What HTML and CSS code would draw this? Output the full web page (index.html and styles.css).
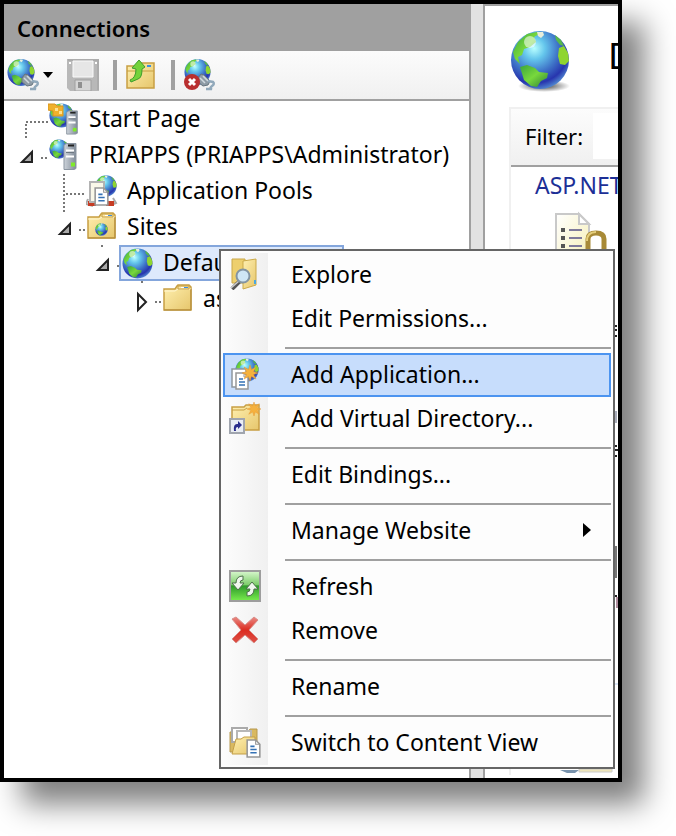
FILE: index.html
```html
<!DOCTYPE html>
<html lang="en">
<head>
<meta charset="utf-8">
<title>Connections</title>
<link rel="stylesheet" href="styles.css">
</head>
<body>
<svg class="defs" aria-hidden="true">
  <defs>
    <radialGradient id="sea" cx=".4" cy=".3" r=".75">
      <stop offset="0" stop-color="#b8ffff"/><stop offset=".25" stop-color="#65c6ec"/><stop offset=".55" stop-color="#3f74c8"/><stop offset=".8" stop-color="#2735ae"/><stop offset="1" stop-color="#5b9bd8"/>
    </radialGradient>
    <linearGradient id="land" x1="0" y1="0" x2="1" y2="1"><stop offset="0" stop-color="#3aa43c"/><stop offset=".5" stop-color="#78d83c"/><stop offset="1" stop-color="#2c7d35"/></linearGradient>
    <linearGradient id="gold" x1="0" y1="0" x2="1" y2="1"><stop offset="0" stop-color="#fff0b0"/><stop offset="1" stop-color="#e6c66c"/></linearGradient>
    <linearGradient id="steel" x1="0" y1="0" x2="1" y2="0"><stop offset="0" stop-color="#cdd3da"/><stop offset="1" stop-color="#7f8a97"/></linearGradient>
    <linearGradient id="leaf" x1="0" y1="0" x2="0" y2="1"><stop offset="0" stop-color="#d9f7cf"/><stop offset=".45" stop-color="#7fce6d"/><stop offset=".5" stop-color="#2f9a2b"/><stop offset="1" stop-color="#7aee4e"/></linearGradient>
    <linearGradient id="rose" x1="0" y1="0" x2="0" y2="1"><stop offset="0" stop-color="#ea8a84"/><stop offset=".5" stop-color="#dc2c20"/><stop offset="1" stop-color="#dd5148"/></linearGradient>
    <linearGradient id="cream" x1="0" y1="0" x2="1" y2="1"><stop offset="0" stop-color="#fff"/><stop offset="1" stop-color="#f6efb4"/></linearGradient>
    <radialGradient id="shade"><stop offset="0" stop-color="#000" stop-opacity=".75"/><stop offset="1" stop-color="#000" stop-opacity="0"/></radialGradient>
  </defs>
  <symbol id="globe" viewBox="0 0 60 60">
    <circle cx="30" cy="30" r="29" fill="url(#sea)"/>
    <path d="M3 22 8 12 17 4 27 2 29 4 24 7 26 12 20 17 14 19 12 25 8 27 10 34 5 29z" fill="url(#land)"/>
    <path d="M10 37 17 35 25 38 29 42 38 43 37 48 31 51 27 57 21 56 14 50z" fill="url(#land)"/>
    <path d="M49 18 54 16 58 23 59 31 55 35 50 34 48 26z" fill="#8fd52f"/>
    <path d="M45 5 51 10 54 16 50 15 46 10z" fill="#58b94b"/>
    <path d="M27 2h6l1 3-3 3-3-2z" fill="#e8edda"/>
    <circle cx="20" cy="12" r="6" fill="#fff" opacity=".55"/>
  </symbol>
  <symbol id="folder" viewBox="0 0 32 32">
    <path d="M2 6h11l2-3 1-1h11l2 2v23H2z" fill="url(#gold)" stroke="#c79f43" stroke-width="1.5"/>
    <path d="M2 8h11l3-2h13" fill="none" stroke="#fff5cf"/>
    <path d="M16 3h11v3H16z" fill="#fbe7a5" stroke="#c79f43"/>
    <path d="M19 4h3v1h-3z" fill="#fff"/><path d="M22 4h4v1h-4z" fill="#3d8ee0"/>
    <path d="M2 27h27V6" fill="none" stroke="#b28b3c"/>
  </symbol>
  <symbol id="server" viewBox="0 0 14 28">
    <path d="M1 3 3 1h10v25l-2 1H1z" fill="url(#steel)" stroke="#8b95a1"/>
    <path d="M5 3h6" stroke="#222" stroke-width="2"/>
    <path d="M3 8h8M3 14h8" stroke="#fff" stroke-width="2"/><path d="M3 10h8" stroke="#6d7781"/>
    <path d="M8 20h4v4H8z" fill="#7fea29"/>
  </symbol>
  <symbol id="page" viewBox="0 0 14 18">
    <path d="M1 1h8l4 4v12H1z" fill="#fff" stroke="#979797" stroke-width="1.5"/>
    <path d="M9 1v4h4" fill="none" stroke="#979797"/>
    <path d="M4 7h4M4 10h6M4 13h6" stroke="#3572b5" stroke-width="1.5"/>
  </symbol>
  <symbol id="spark" viewBox="0 0 16 16">
    <path d="m8 0 1.5 4.5L14 2l-2.500 4.500L16 8l-4.500 1.500L14 14 9.500 11.500 8 16l-1.500-4.500L2 14l2.500-4.500L0 8l4.500-1.500L2 2l4.500 2.500z" fill="#f5b13d" stroke="#e69632" stroke-width=".5"/>
  </symbol>
  <symbol id="plug" viewBox="0 0 20 20">
    <path d="m2 7 3-4 3 1 6 6-2 4-5 1-5-4z" fill="#8e9ba5" stroke="#66747e"/>
    <path d="m4 7 5 5M7 5l5 5" stroke="#d0d9df" stroke-width="1.5"/>
    <path d="m12 10 5 1q2 2-1 4t0 3h-6" fill="none" stroke="#91a9bb" stroke-width="2.5"/>
  </symbol>
</svg>

<main class="window">
  <section class="connections">
    <h1 class="connections-title">Connections</h1>
    <div class="toolbar">
      <button class="tool tool-connect" aria-label="Connect">
        <svg width="34" height="34" viewBox="0 0 34 34"><use href="#globe" x="0" y="0" width="28" height="29"/><use href="#plug" x="13" y="13" width="20" height="20"/></svg>
        <svg width="10" height="6" viewBox="0 0 10 6"><path d="M0 0h10L5 6z"/></svg>
      </button>
      <button class="tool" aria-label="Save">
        <svg width="32" height="32" viewBox="0 0 32 32"><path d="M0 0h32v32H3l-3-3z" fill="#b8b8b8"/><path d="M1 1h30v30" fill="none" stroke="#acacac" stroke-width="2"/><path d="M6 2h20v16H6z" fill="#e6e6e6" stroke="#fafafa"/><path d="M8 21h16v11H8z" fill="#d6d6d6" stroke="#a0a0a0"/><path d="M11 23h4v6h-4z" fill="#909090"/><path d="M2 3h2v2H2zM28 3h2v2h-2z" fill="#fff"/></svg>
      </button>
      <span class="divider"></span>
      <button class="tool" aria-label="Up">
        <svg width="32" height="32" viewBox="0 0 32 32"><path d="M2 7h12l2-3h13v25H2z" fill="url(#gold)" stroke="#c79f43" stroke-width="1.5"/><path d="M2 12h27" stroke="#c79f43"/><path d="M22 6h4v2h-4z" fill="#3d8ee0"/><path d="M5 21q6-2 6-11l-4-1 7-8 6 7-3 2q0 9-4 10l-7 3z" fill="#74d23b" stroke="#3d9c2e"/></svg>
      </button>
      <span class="divider"></span>
      <button class="tool" aria-label="Disconnect">
        <svg width="34" height="34" viewBox="0 0 34 34"><use href="#globe" x="1" y="0" width="27" height="28"/><use href="#plug" x="13" y="13" width="20" height="20"/><circle cx="9" cy="24" r="8" fill="#b92f2f"/><path d="m6 21 6 6m0-6-6 6" stroke="#fff" stroke-width="3"/></svg>
      </button>
    </div>
    <ul class="tree">
      <li>
        <div class="row">
          <svg class="lines" width="25" height="36"><path class="dots" d="M28 21H5M6 23v16"/></svg>
          <a class="node" href="#"><svg width="32" height="32" viewBox="0 0 32 32"><use href="#globe" x="1" y="0" width="25" height="25"/><path d="M0 1h7l2 2h6v10H5V8L0 7z" fill="#f0b12b" stroke="#d89420"/><path d="M7 5h3v3H7zM11 8h3v3h-3z" fill="#ffe18e"/><use href="#server" x="17" y="7" width="14" height="25"/></svg>Start Page</a>
        </div>
      </li>
      <li>
        <div class="row">
          <svg class="lines" width="25" height="36"><path class="open" d="M12 15v10H2z"/><path class="dots" d="M21 21h7"/></svg>
          <a class="node" href="#"><svg width="32" height="32" viewBox="0 0 32 32"><use href="#globe" x="1" y="0" width="20" height="20"/><use href="#server" x="15" y="3" width="14" height="29"/></svg>PRIAPPS (PRIAPPS\Administrator)</a>
        </div>
        <ul>
          <li>
            <div class="row">
              <svg class="lines" width="25" height="36"><path class="dots" d="M6 1v38M8 21h20"/></svg>
              <a class="node" href="#"><svg width="32" height="32" viewBox="0 0 32 32"><use href="#globe" x="9" y="0" width="22" height="22"/><path d="M2 24 0 29l7 2M27 23l3 5-5 2" fill="none" stroke="#aaa" stroke-width="2"/><path d="M2 26h8v5H2zM20 26h8v5h-8z" fill="#c63c24"/><path d="M4 7h14v20H4z" fill="#faf8e9" stroke="#b3b3b3" stroke-width="2"/><use href="#page" x="8" y="12" width="15" height="19"/></svg>Application Pools</a>
            </div>
          </li>
          <li>
            <div class="row">
              <svg class="lines" width="25" height="36"><path class="open" d="M12 15v10H2z"/><path class="dots" d="M21 21h7"/></svg>
              <a class="node" href="#"><svg width="32" height="32" viewBox="0 0 32 32"><use href="#folder" width="32" height="32"/><use href="#globe" x="9" y="12" width="13" height="13"/></svg>Sites</a>
            </div>
            <ul>
              <li>
                <div class="row">
                  <svg class="lines" width="25" height="36"><path class="dots" d="M7 1h2"/><path class="open" d="M14 15v10H4z"/><path class="dots" d="M23 21h2"/></svg>
                  <a class="node selected" href="#"><svg width="32" height="32" viewBox="0 0 32 32"><use href="#globe" x="0" y="1" width="31" height="31"/></svg>Default Web Site</a>
                </div>
                <ul>
                  <li>
                    <div class="row">
                      <svg class="lines" width="25" height="36"><path class="dots" d="M7 1h2"/><path class="closed" d="M4 13v16l8-8z"/><path class="dots" d="M21 21h7"/></svg>
                      <a class="node" href="#"><svg width="32" height="32" viewBox="0 0 32 32"><use href="#folder" width="32" height="32"/></svg>as</a>
                    </div>
                  </li>
                </ul>
              </li>
            </ul>
          </li>
        </ul>
      </li>
    </ul>
  </section>

  <section class="home">
    <header class="home-head">
      <svg width="62" height="64" viewBox="0 0 62 64"><ellipse cx="34" cy="56" rx="26" ry="6" fill="url(#shade)"/><use href="#globe" x="0" y="0" width="60" height="60"/></svg>
      <h2>D</h2>
    </header>
    <div class="features">
      <div class="filter"><label for="filter">Filter:</label><input id="filter" type="text"></div>
      <h3>ASP.NET</h3>
      <svg class="feature-icons" width="109" height="570" viewBox="0 0 109 570">
        <path d="M47 9h23l10 10v40H47z" fill="url(#cream)" stroke="#c9c9c9" stroke-width="2"/>
        <path d="M70 9v10h10z" fill="#fff" stroke="#c9c9c9" stroke-width="2"/>
        <path d="M52 25h4M52 33h4M52 41h4" stroke="#555" stroke-width="4"/><path d="M60 25h13M60 33h13M60 41h13" stroke="#807b9b" stroke-width="2"/>
        <path d="M79 48V34q0-6 8-6t8 6v14" fill="none" stroke="#a88a37" stroke-width="5"/><path d="M78 36q0-9 9-9" fill="none" stroke="#e5cf7d" stroke-width="2"/>
        <path d="M106 121h2M106 125h2M106 131h2M106 241h2M106 245h3M106 251h2M106 391h2" stroke="#222" stroke-width="2"/>
        <path d="M106 206h2v12h-2z" fill="#a9adba"/><path d="M106 341h2v32h-2z" fill="#777"/><path d="M108 392v11" stroke="#601f40" stroke-width="1"/><path d="M106 479h3" stroke="#dae6f6" stroke-width="2"/>
        <path d="M51 565h19l-4 3h-8z" fill="#7993ad"/><path d="M70 564h33v3H70z" fill="#eee5ba" stroke="#ccc"/>
      </svg>
    </div>
  </section>

  <div class="menu" role="menu">
    <button class="item" role="menuitem"><svg width="32" height="32" viewBox="0 0 32 32"><path d="M3 1h13v24H3z" fill="#edcf6e" stroke="#c9a748"/><path d="M14 3 27 1v26l-13 4z" fill="url(#gold)" stroke="#cba948"/><path d="m11 23-8 8" stroke="#555" stroke-width="4"/><path d="m10 23-8 7" stroke="#ccc" stroke-width="1.500"/><circle cx="14" cy="18" r="6.500" fill="#cfe6f5" stroke="#8394a2" stroke-width="2"/><path d="M26 22v4" stroke="#4ba7df" stroke-width="2"/></svg>Explore</button>
    <button class="item" role="menuitem"><span class="blank"></span>Edit Permissions...</button>
    <hr>
    <button class="item active" role="menuitem"><svg width="32" height="32" viewBox="0 0 32 32"><use href="#globe" x="6" y="0" width="24" height="24"/><path d="M3 11h14v18H3z" fill="#fff" stroke="#8e969d" stroke-width="1.500"/><use href="#page" x="6" y="14" width="14" height="18"/><use href="#spark" x="13" y="7" width="16" height="16"/></svg>Add Application...</button>
    <button class="item" role="menuitem"><svg width="32" height="32" viewBox="0 0 32 32"><path d="M3 5h12l2-2h13v25H3z" fill="url(#gold)" stroke="#c79f43" stroke-width="1.500"/><path d="M3 8h12l3-2" stroke="#c79f43" fill="none"/><use href="#spark" x="18" y="0" width="14" height="14"/><path d="M1 17h14v14H1z" fill="#e9edf4" stroke="#a0a5ae" stroke-width="2"/><path d="M5 29q-1-8 4-7v-3l4 4-4 4v-2q-3 0-2 4z" fill="#292d8b"/></svg>Add Virtual Directory...</button>
    <hr>
    <button class="item" role="menuitem"><span class="blank"></span>Edit Bindings...</button>
    <hr>
    <button class="item" role="menuitem"><span class="blank"></span>Manage Website<svg class="arrow" width="8" height="14" viewBox="0 0 8 14"><path d="M0 0 8 7 0 14z"/></svg></button>
    <hr>
    <button class="item" role="menuitem"><svg width="32" height="32" viewBox="0 0 32 32"><path d="M1 1h30v30H1z" fill="url(#leaf)" stroke="#9d9d9d" stroke-width="2"/><path d="M14 6q-7 0-7 7H3l6 7 6-7h-4q0-3 3-3zM18 26q7 0 7-7h4l-6-7-6 7h4q0 3-3 3z" fill="#f0f7ee" stroke="#4d704a"/></svg>Refresh</button>
    <button class="item" role="menuitem"><svg width="32" height="32" viewBox="0 0 32 32"><path d="m3 5 4-2 9 8 9-8 4 3-9 10 9 9-4 4-9-8-9 8-4-4 9-9z" fill="url(#rose)" stroke="#d8908b"/></svg>Remove</button>
    <hr>
    <button class="item" role="menuitem"><span class="blank"></span>Rename</button>
    <hr>
    <button class="item" role="menuitem"><svg width="32" height="32" viewBox="0 0 32 32"><path d="M1 6h18l2-3h7v23H1z" fill="#d9b960" stroke="#b6984e"/><path d="M3 2h15v14H3z" fill="#fff" stroke="#aaa" stroke-width="2"/><path d="M8 5h14v14H8z" fill="#fff" stroke="#b8b8b8" stroke-width="2"/><path d="m3 28 4-15h5l3-2h11v17z" fill="url(#gold)" stroke="#c39e47"/><use href="#page" x="17" y="13" width="15" height="19"/></svg>Switch to Content View</button>
  </div>
</main>
</body>
</html>
```
FILE: styles.css
```css
* { box-sizing: border-box; }

body {
  margin: 0;
  padding: 0 54px 54px 0;
  background: #fff;
  color: #000;
  font: 23px/30px "Noto Sans", "Open Sans", sans-serif;
}

h1, h2, h3, ul { margin: 0; padding: 0; }
ul { list-style: none; }
svg { display: block; flex: none; }
button, input { font: inherit; color: inherit; border: 0; }
button { background: none; padding: 0; }

.defs { position: absolute; width: 0; height: 0; }

.window {
  position: relative;
  display: grid;
  grid-template-columns: 467px minmax(0, 1fr);
  gap: 12px;
  min-height: calc(100vh - 54px);
  border: 4px solid #000;
  background: #e2e2e2;
  box-shadow: 22px 22px 28px rgba(0, 0, 0, .5);
}

.connections {
  background: #fff;
  border-right: 2px solid #a0a0a0;
}

.connections-title {
  height: 47px;
  padding: 9px 13px;
  background: #a0a0a0;
  font-size: 22px;
  font-weight: 600;
}

.toolbar {
  display: flex;
  align-items: center;
  gap: 8px;
  height: 50px;
  padding-left: 3px;
  background: linear-gradient(#fcfcfc, #f0f0f0);
  border-bottom: 2px solid #a0a0a0;
}

.tool-connect { display: flex; align-items: center; gap: 2px; margin-right: 6px; }

.divider {
  width: 4px;
  height: 30px;
  margin: 0 0 0 6px;
  background: #a0a0a0;
}

.tree ul { padding-left: 38px; }
.tree > li { padding-left: 16px; }
.tree ul ul { padding-left: 36px; }
.tree ul ul ul { padding-left: 40px; }

.row { display: flex; height: 36px; }
.lines { overflow: visible; }
.dots { fill: none; stroke: #777; stroke-width: 2px; stroke-dasharray: 2 2; }
.open { fill: #aaa; stroke: #222; stroke-width: 2px; }
.closed { fill: #fff; stroke: #222; stroke-width: 2px; }

.node {
  display: flex;
  gap: 9px;
  padding-left: 1px;
  border: 2px solid transparent;
  color: inherit;
  text-decoration: none;
  white-space: nowrap;
}

.selected { background: #dde9fc; border-color: #84a6dc; }

.home {
  display: flex;
  flex-direction: column;
  overflow: hidden;
  background: #fff;
  border: solid #a0a0a0;
  border-width: 2px 0 0 2px;
}

.home-head {
  display: flex;
  gap: 36px;
  height: 101px;
  padding: 24px 0 0 25px;
}

.home-head h2 { font-size: 36px; font-weight: 400; line-height: 52px; }

.features { margin-left: 24px; border-left: 2px solid #f0f0f0; }

.filter {
  display: flex;
  align-items: center;
  gap: 10px;
  height: 60px;
  padding: 0 0 2px 14px;
  background: linear-gradient(#fcfcfc, #f0f0f0);
  border-top: 2px solid #f0f0f0;
  border-bottom: 2px solid #a0a0a0;
  font-size: 22px;
}

.filter input { width: 200px; height: 46px; background: #fff; }

.features h3 {
  height: 38px;
  padding-left: 24px;
  color: #1c2f96;
  font-size: 23px;
  font-weight: 400;
  line-height: 36px;
}

.feature-icons { margin-left: -2px; }

.menu {
  position: absolute;
  top: 245px;
  left: 215px;
  right: 3px;
  padding: 2px;
  border: 2px solid #666;
  background: linear-gradient(90deg, #fdfdfd, #f0f0f0) 0 2px / 47px calc(100% - 4px) no-repeat #fdfdfd;
}

.item {
  display: flex;
  align-items: center;
  gap: 30px;
  width: 100%;
  height: 44px;
  padding: 0 0 2px 4px;
  border: 2px solid transparent;
  text-align: left;
  white-space: nowrap;
}

.active { background: #c7ddfc; border-color: #4c94f0; }
.blank { width: 32px; }
.arrow { margin: 0 18px 0 auto; }

.menu hr {
  height: 2px;
  margin: 6px 0 4px 62px;
  border: 0;
  background: #a0a0a0;
}
```
